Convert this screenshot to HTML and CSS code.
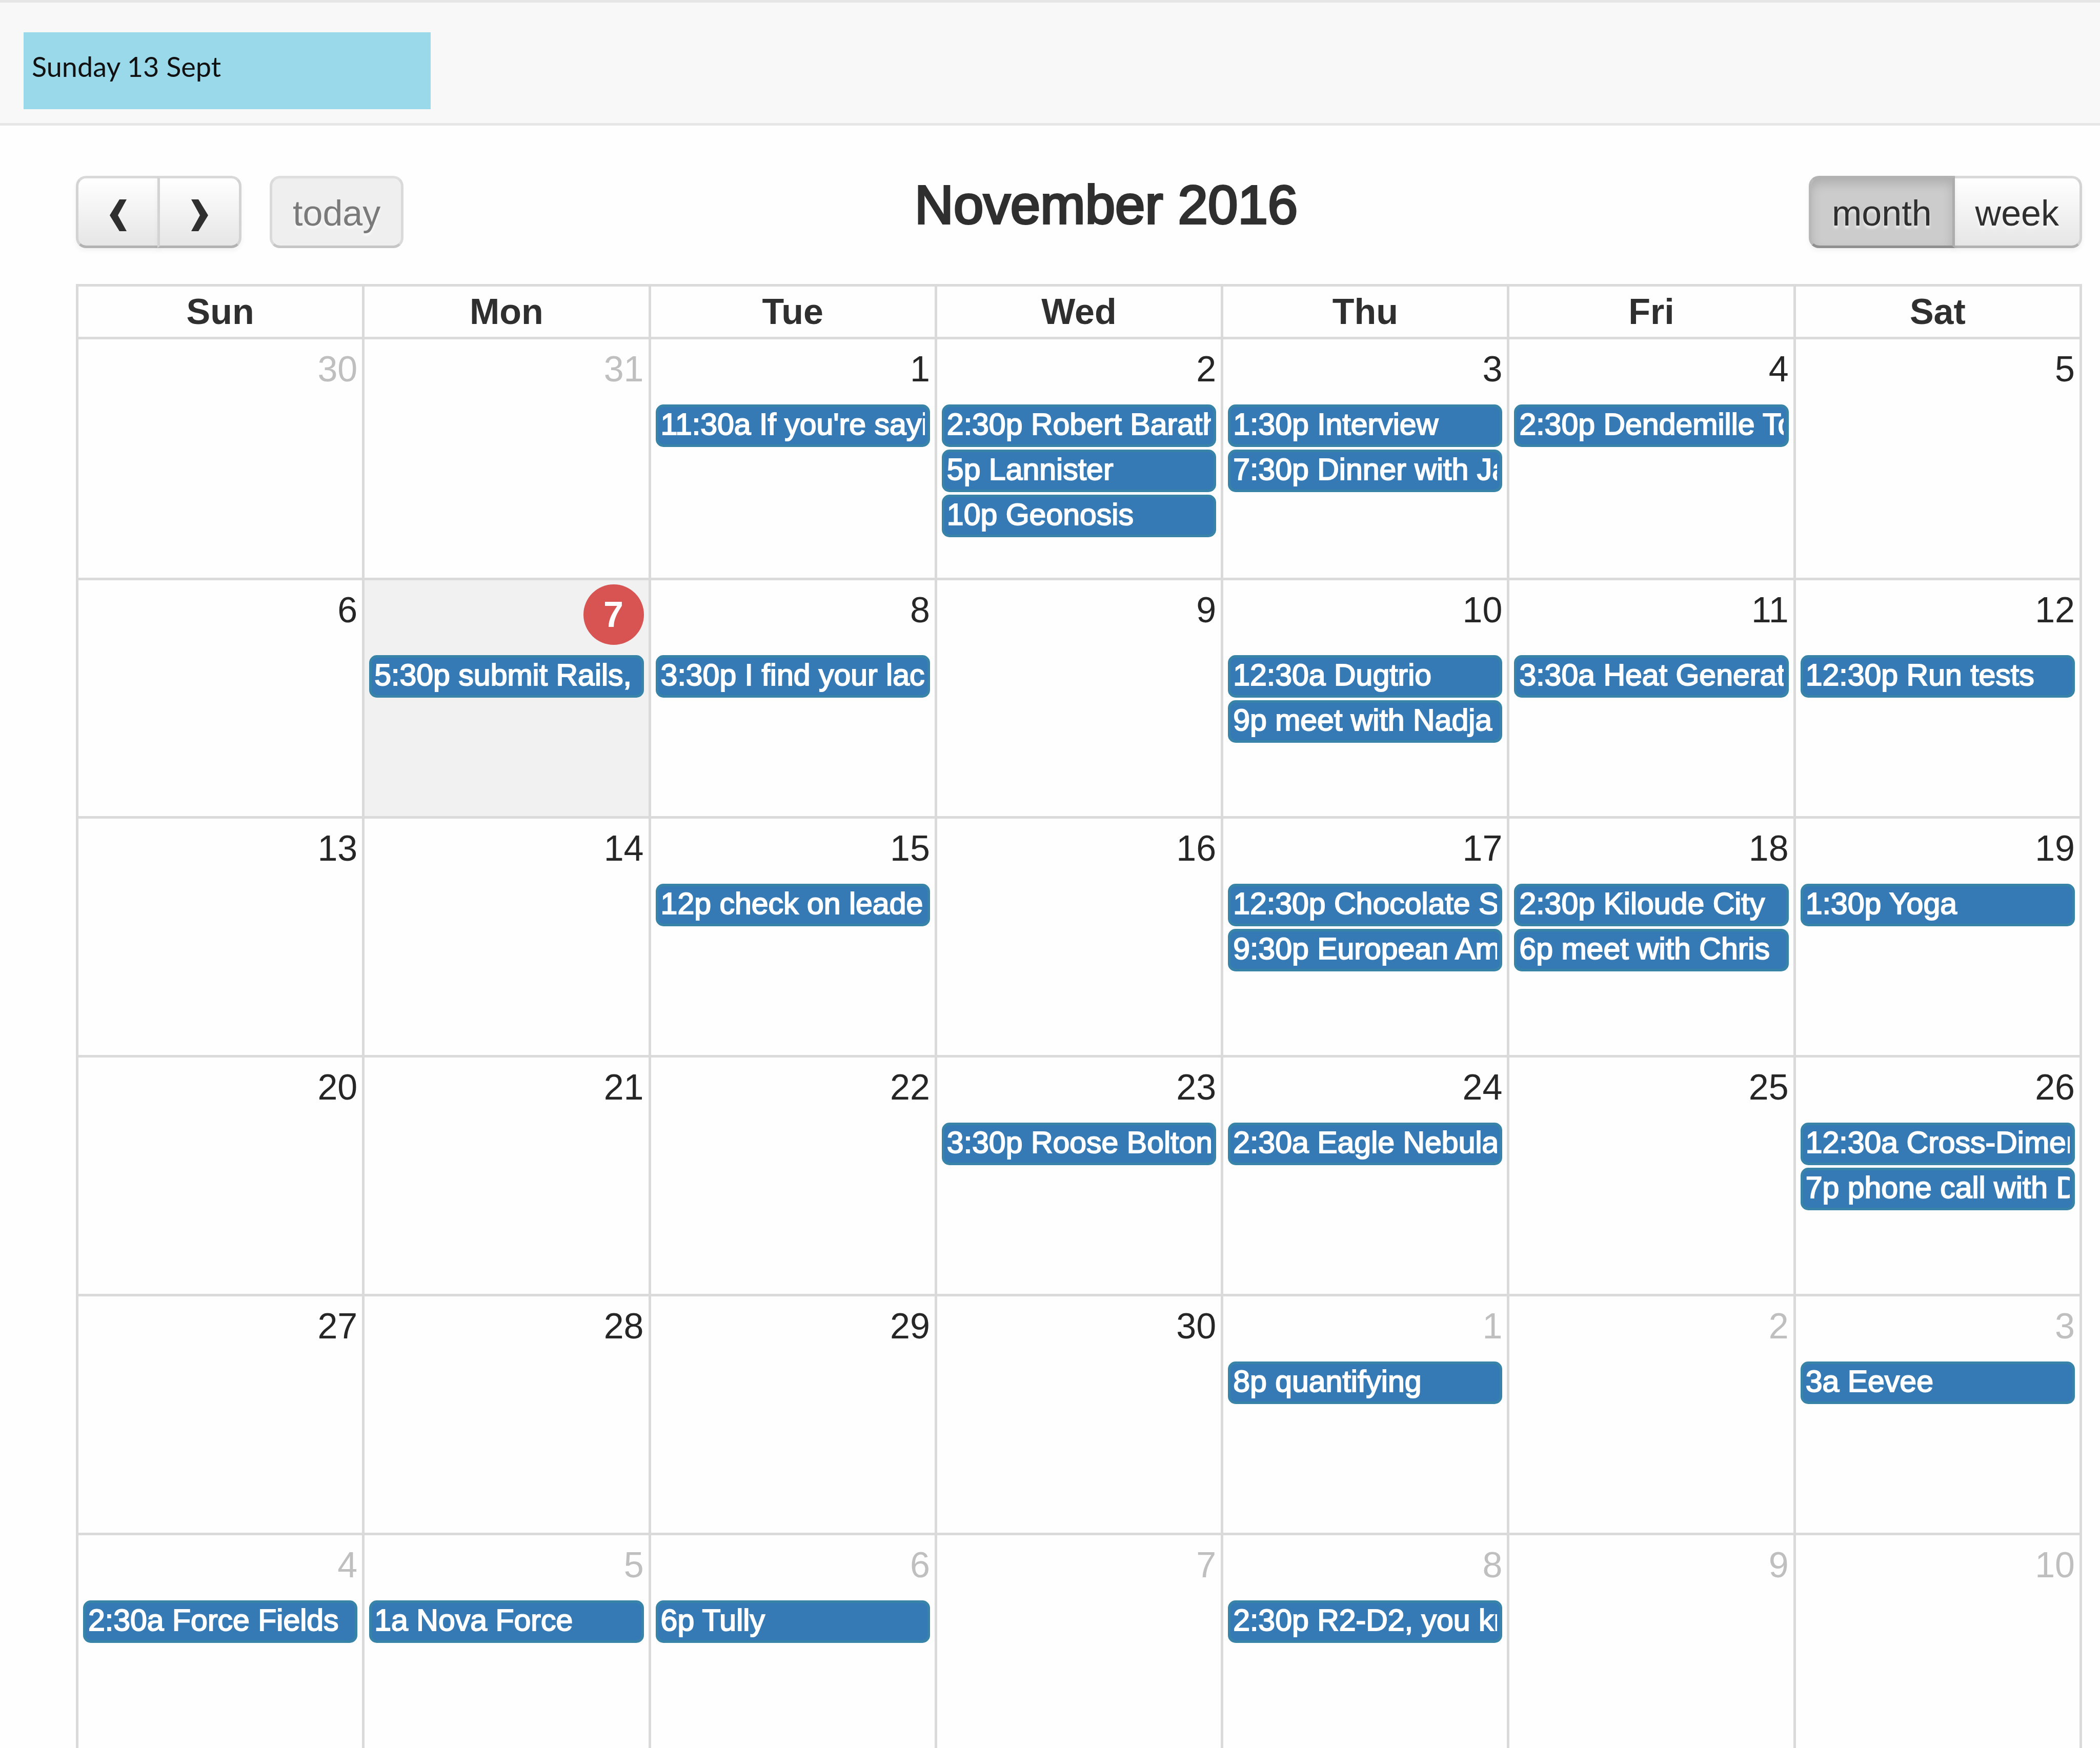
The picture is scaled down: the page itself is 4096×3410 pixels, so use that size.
FILE: index.html
```html
<!DOCTYPE html>
<html lang="en">
<head>
<meta charset="utf-8">
<title>November 2016</title>
<link rel="stylesheet" href="styles.css">
</head>
<body>
<div class="app">
  <header class="topbar">
    <div class="date-label">Sunday 13 Sept</div>
  </header>
  <main class="calendar">
    <div class="toolbar">
      <div class="toolbar-left">
        <div class="btn-group">
          <button type="button" class="btn btn-icon" aria-label="Previous month">
            <svg class="chevron" viewBox="0 0 33 62" aria-hidden="true"><path d="M19 0H33L16 31L33 62H19L0 31Z"/></svg>
          </button>
          <button type="button" class="btn btn-icon" aria-label="Next month">
            <svg class="chevron" viewBox="0 0 33 62" aria-hidden="true"><path d="M14 0H0L17 31L0 62H14L33 31Z"/></svg>
          </button>
        </div>
        <button type="button" class="btn btn-today" disabled>today</button>
      </div>
      <h2 class="title">November 2016</h2>
      <div class="btn-group">
        <button type="button" class="btn btn-active" aria-pressed="true">month</button>
        <button type="button" class="btn" aria-pressed="false">week</button>
      </div>
    </div>
    <table class="month">
      <thead>
        <tr><th>Sun</th><th>Mon</th><th>Tue</th><th>Wed</th><th>Thu</th><th>Fri</th><th>Sat</th></tr>
      </thead>
      <tbody>
        <tr>
          <td class="other"><div class="day">30</div></td>
          <td class="other"><div class="day">31</div></td>
          <td><div class="day">1</div><a href="#" class="event">11:30a If you're sayi</a></td>
          <td><div class="day">2</div><a href="#" class="event">2:30p Robert Barath</a><a href="#" class="event">5p Lannister</a><a href="#" class="event">10p Geonosis</a></td>
          <td><div class="day">3</div><a href="#" class="event">1:30p Interview</a><a href="#" class="event">7:30p Dinner with Ja</a></td>
          <td><div class="day">4</div><a href="#" class="event">2:30p Dendemille To</a></td>
          <td><div class="day">5</div></td>
        </tr>
        <tr class="current-week">
          <td><div class="day">6</div></td>
          <td class="today"><div class="day"><span class="badge">7</span></div><a href="#" class="event">5:30p submit Rails,</a></td>
          <td><div class="day">8</div><a href="#" class="event">3:30p I find your lac</a></td>
          <td><div class="day">9</div></td>
          <td><div class="day">10</div><a href="#" class="event">12:30a Dugtrio</a><a href="#" class="event">9p meet with Nadja</a></td>
          <td><div class="day">11</div><a href="#" class="event">3:30a Heat Generati</a></td>
          <td><div class="day">12</div><a href="#" class="event">12:30p Run tests</a></td>
        </tr>
        <tr>
          <td><div class="day">13</div></td>
          <td><div class="day">14</div></td>
          <td><div class="day">15</div><a href="#" class="event">12p check on leade</a></td>
          <td><div class="day">16</div></td>
          <td><div class="day">17</div><a href="#" class="event">12:30p Chocolate S</a><a href="#" class="event">9:30p European Am</a></td>
          <td><div class="day">18</div><a href="#" class="event">2:30p Kiloude City</a><a href="#" class="event">6p meet with Chris</a></td>
          <td><div class="day">19</div><a href="#" class="event">1:30p Yoga</a></td>
        </tr>
        <tr>
          <td><div class="day">20</div></td>
          <td><div class="day">21</div></td>
          <td><div class="day">22</div></td>
          <td><div class="day">23</div><a href="#" class="event">3:30p Roose Bolton</a></td>
          <td><div class="day">24</div><a href="#" class="event">2:30a Eagle Nebula</a></td>
          <td><div class="day">25</div></td>
          <td><div class="day">26</div><a href="#" class="event">12:30a Cross-Dimen</a><a href="#" class="event">7p phone call with D</a></td>
        </tr>
        <tr>
          <td><div class="day">27</div></td>
          <td><div class="day">28</div></td>
          <td><div class="day">29</div></td>
          <td><div class="day">30</div></td>
          <td class="other"><div class="day">1</div><a href="#" class="event">8p quantifying</a></td>
          <td class="other"><div class="day">2</div></td>
          <td class="other"><div class="day">3</div><a href="#" class="event">3a Eevee</a></td>
        </tr>
        <tr>
          <td class="other"><div class="day">4</div><a href="#" class="event">2:30a Force Fields</a></td>
          <td class="other"><div class="day">5</div><a href="#" class="event">1a Nova Force</a></td>
          <td class="other"><div class="day">6</div><a href="#" class="event">6p Tully</a></td>
          <td class="other"><div class="day">7</div></td>
          <td class="other"><div class="day">8</div><a href="#" class="event">2:30p R2-D2, you kn</a></td>
          <td class="other"><div class="day">9</div></td>
          <td class="other"><div class="day">10</div></td>
        </tr>
      </tbody>
    </table>
  </main>
</div>
</body>
</html>
```
FILE: styles.css
```css
* {
  box-sizing: border-box;
}

body {
  margin: 0;
  background: #fefefe;
  color: #2f2f2f;
  font: 70px/100px "Liberation Sans", Arial, sans-serif;
}

.app {
  height: 100vh;
  overflow: hidden;
}

/* Top bar */
.topbar {
  padding: 58px 46px 27px;
  background: #f8f8f8;
  border-top: 5px solid #e6e6e6;
  border-bottom: 5px solid #e6e6e6;
}

.date-label {
  width: 794px;
  height: 150px;
  padding: 35px 16px;
  background: #9ad9ea;
  color: #111;
  font: 54px/64px Lato, Carlito, sans-serif;
}

/* Toolbar */
.calendar {
  padding: 98px 35px 0 148px;
}

.toolbar {
  display: flex;
  justify-content: space-between;
  align-items: flex-start;
  margin-bottom: 70px;
}

.toolbar-left {
  display: flex;
  gap: 55px;
}

.title {
  margin: 0;
  font-size: 105px;
  font-weight: 400;
  line-height: 114px;
  -webkit-text-stroke: 4px #2f2f2f;
}

.btn-group {
  display: flex;
}

.btn {
  height: 141px;
  margin: 0;
  padding: 5px 40px 0;
  border: 5px solid;
  border-color: #d9d9d9 #d3d3d3 #b2b2b2;
  border-radius: 20px;
  background: linear-gradient(#fff, #e6e6e6);
  box-shadow: 0 5px 10px rgba(0, 0, 0, 0.05);
  color: #2f2f2f;
  font: inherit;
  text-shadow: 0 5px 5px rgba(255, 255, 255, 0.75);
}

.btn-group .btn:first-child {
  border-top-right-radius: 0;
  border-bottom-right-radius: 0;
}

.btn-group .btn:last-child {
  margin-left: -5px;
  border-top-left-radius: 0;
  border-bottom-left-radius: 0;
}

.btn-icon {
  display: flex;
  align-items: center;
  justify-content: center;
  width: 164px;
}

.btn-today {
  border-color: #dedede #dadada #c6c6c6;
  background: #efefef;
  box-shadow: none;
  color: #7a7a7a;
}

.btn-active {
  position: relative;
  z-index: 1;
  border-color: #b2b2b2 #adadad #8f8f8f #b8b8b8;
  background: #ccc;
  box-shadow: inset 0 10px 20px rgba(0, 0, 0, 0.15), 0 5px 10px rgba(0, 0, 0, 0.05);
}

.chevron {
  width: 33px;
  height: 62px;
  margin-top: 8px;
  fill: #2f2f2f;
}

/* Month grid */
.month {
  width: 100%;
  table-layout: fixed;
  border-collapse: separate;
  border-spacing: 0;
  border-top: 5px solid #dadada;
  border-left: 5px solid #dadada;
}

.month th,
.month td {
  padding: 0;
  border-right: 5px solid #dadada;
  border-bottom: 5px solid #dadada;
}

.month th {
  height: 103px;
  line-height: 98px;
}

.month td {
  height: 466px;
  padding: 0 9px;
  vertical-align: top;
}

.month tr:first-child td {
  height: 470px;
}

.month .current-week td {
  height: 465px;
}

.day {
  height: 127px;
  padding-top: 8px;
  color: #262626;
  text-align: right;
}

.current-week .day {
  height: 146px;
}

.other .day {
  color: #bfbfbf;
}

.month .today {
  background: #f1f1f1;
}

.badge {
  display: block;
  width: 118px;
  height: 118px;
  margin-left: auto;
  border-radius: 50%;
  background: #d75452;
  color: #fff;
  font-weight: 700;
  line-height: 118px;
  text-align: center;
}

.event {
  display: block;
  height: 83px;
  margin-bottom: 5px;
  padding: 0 5px;
  border: 5px solid #3884a8;
  border-radius: 15px;
  background: #367ab5;
  color: #fff;
  font-size: 59px;
  line-height: 68px;
  text-decoration: none;
  white-space: nowrap;
  overflow: hidden;
  overflow: clip;
  overflow-clip-margin: content-box;
  -webkit-text-stroke: 2px #fff;
}
```
